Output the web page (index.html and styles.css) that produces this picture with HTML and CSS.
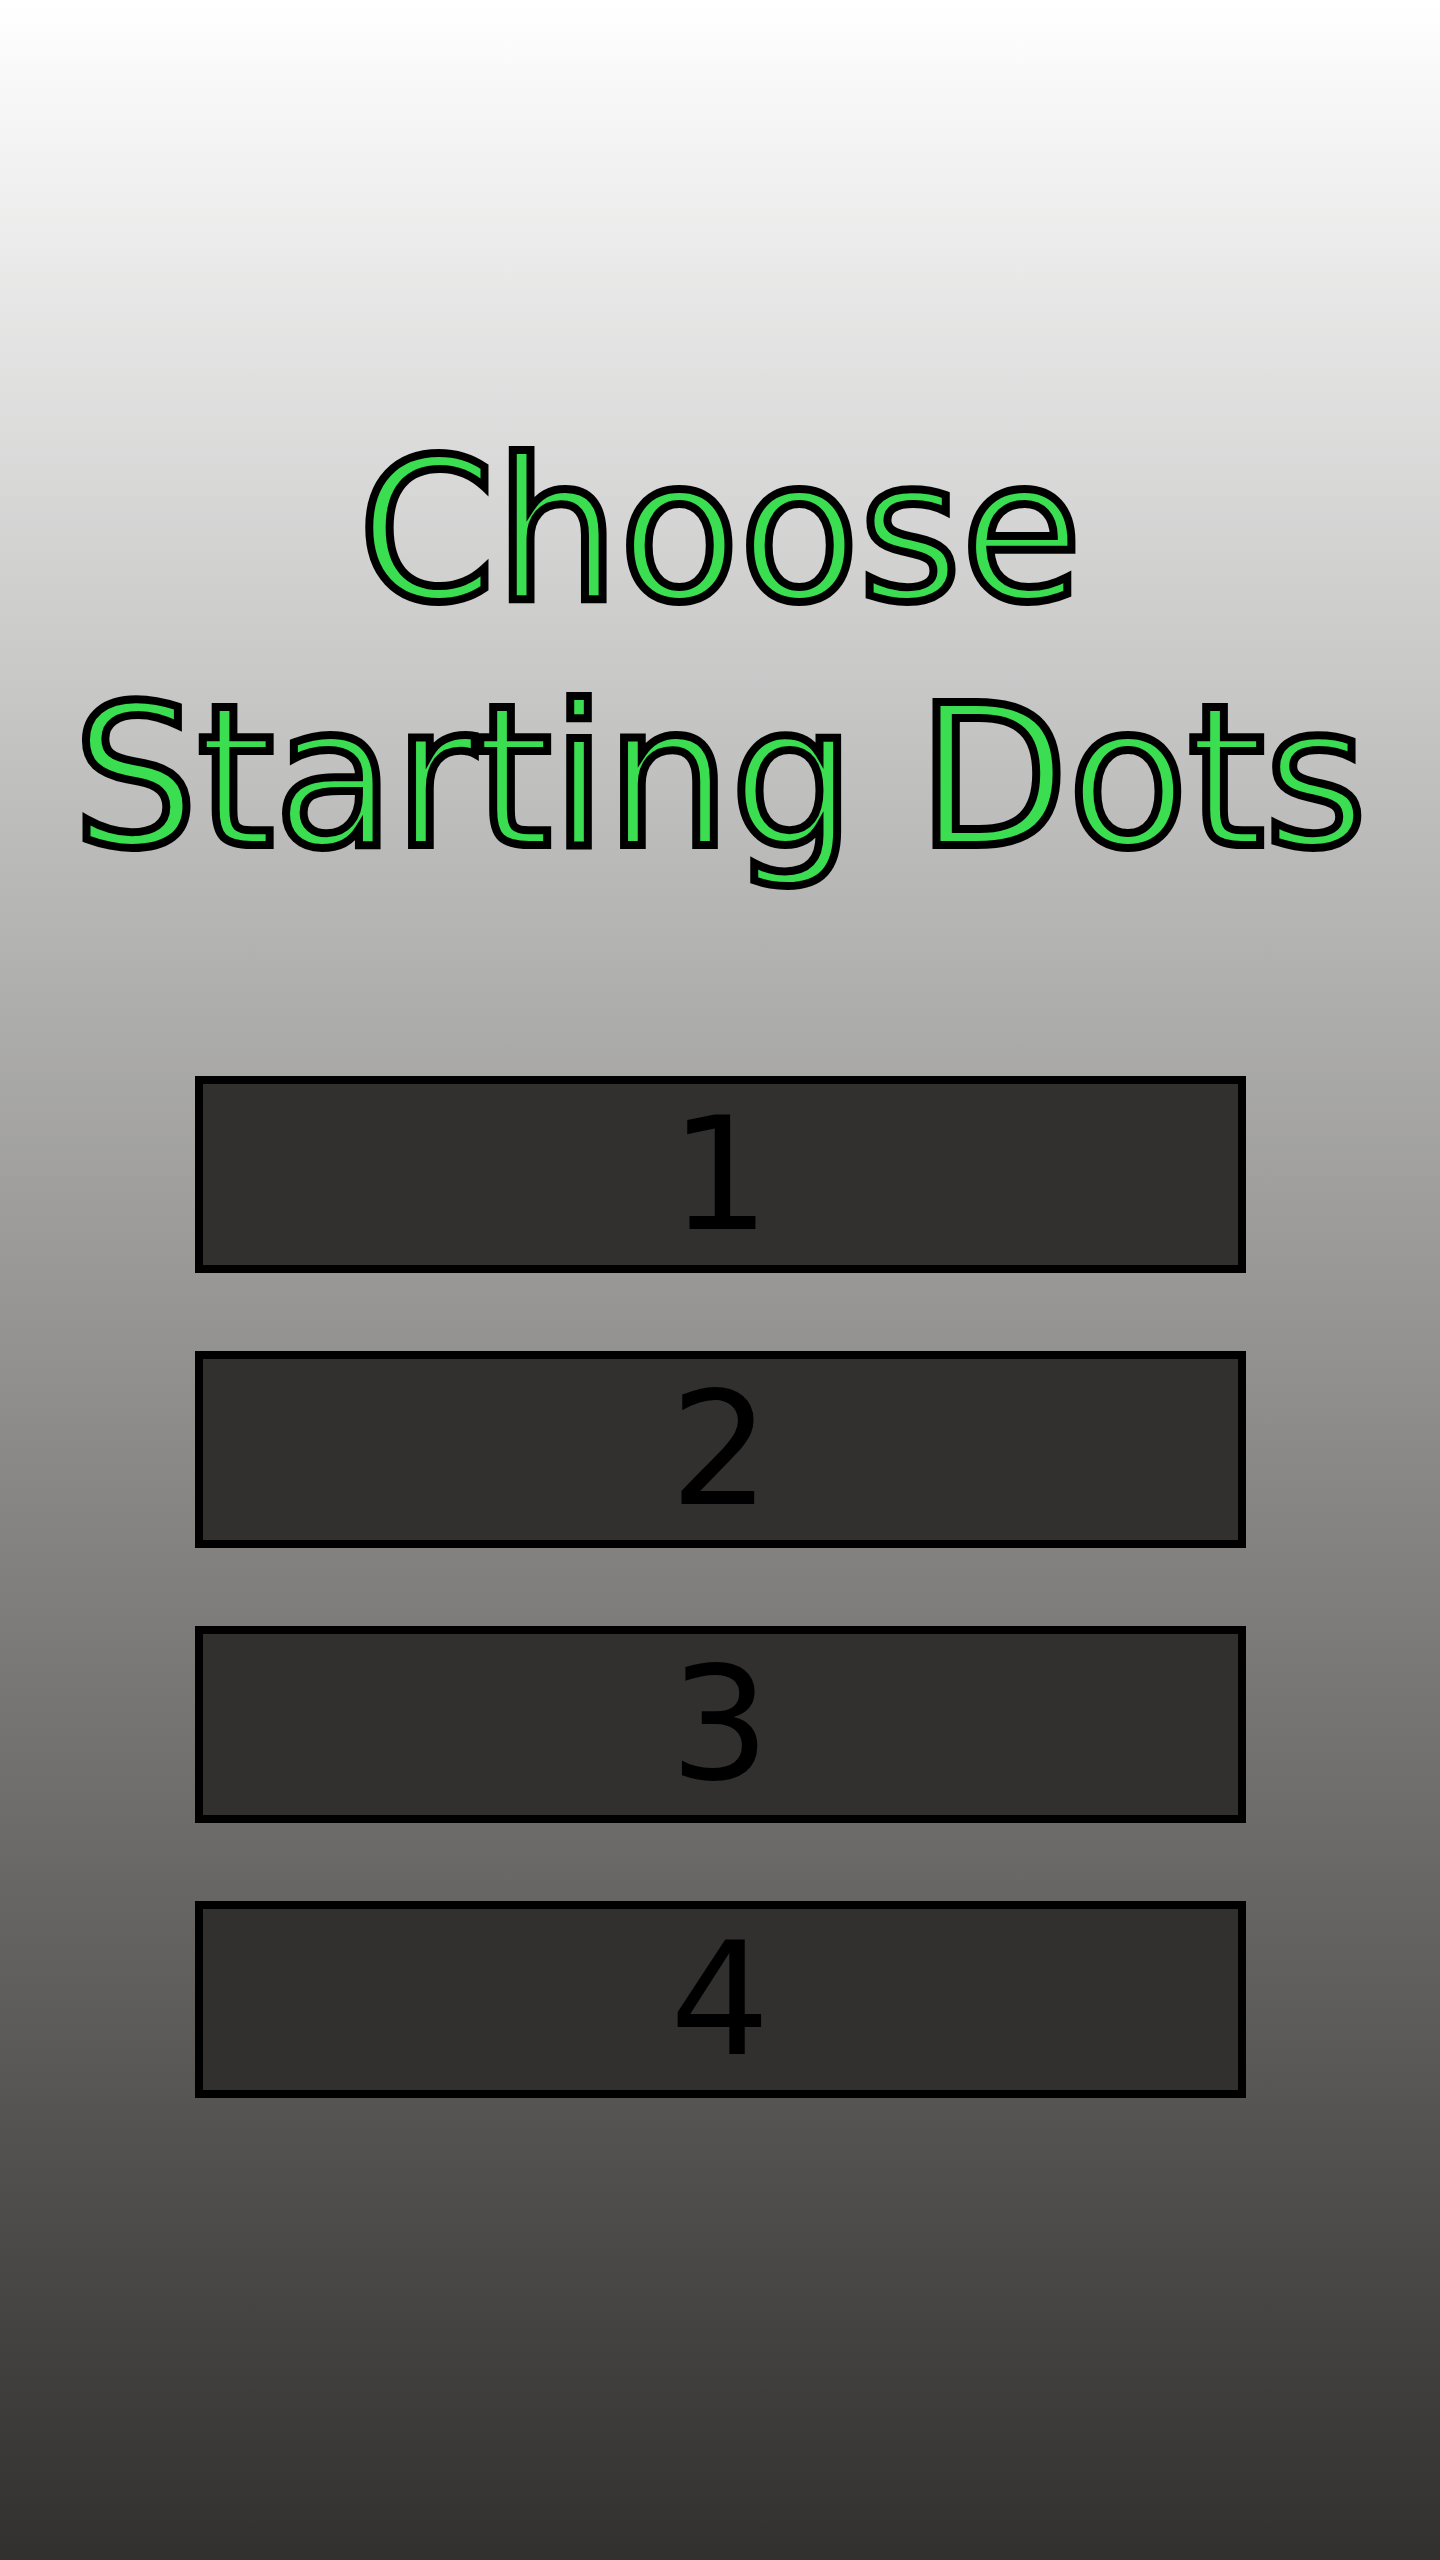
FILE: index.html
```html
<!DOCTYPE html>
<html lang="en">
<head>
<meta charset="utf-8">
<title>Choose Starting Dots</title>
<link rel="stylesheet" href="styles.css">
</head>
<body>
<main class="screen">
  <h1 class="title">Choose<br>Starting Dots</h1>
  <div class="choices">
    <button class="choice">1</button>
    <button class="choice">2</button>
    <button class="choice">3</button>
    <button class="choice">4</button>
  </div>
</main>
</body>
</html>
```

FILE: styles.css
```css
html, body {
  margin: 0;
  padding: 0;
}

body {
  width: 1440px;
  height: 2560px;
  background: linear-gradient(to bottom, #ffffff 0px, #31302e 2560px);
  font-family: "DejaVu Sans", sans-serif;
}

.screen {
  display: flex;
  flex-direction: column;
  align-items: center;
  padding-top: 408px;
}

.title {
  margin: 0;
  font-size: 196px;
  line-height: 246px;
  font-weight: normal;
  text-align: center;
  color: #3ade50;
  -webkit-text-stroke: 8px #000;
}

.choices {
  margin-top: 176px;
  display: flex;
  flex-direction: column;
  gap: 78px;
}

.choice {
  box-sizing: border-box;
  width: 1051px;
  height: 197px;
  margin: 0;
  padding: 0;
  border: 8px solid #000;
  background: #31302e;
  color: #000;
  font-family: "DejaVu Sans", sans-serif;
  font-size: 157px;
  line-height: 1;
  display: flex;
  align-items: center;
  justify-content: center;
}
```
